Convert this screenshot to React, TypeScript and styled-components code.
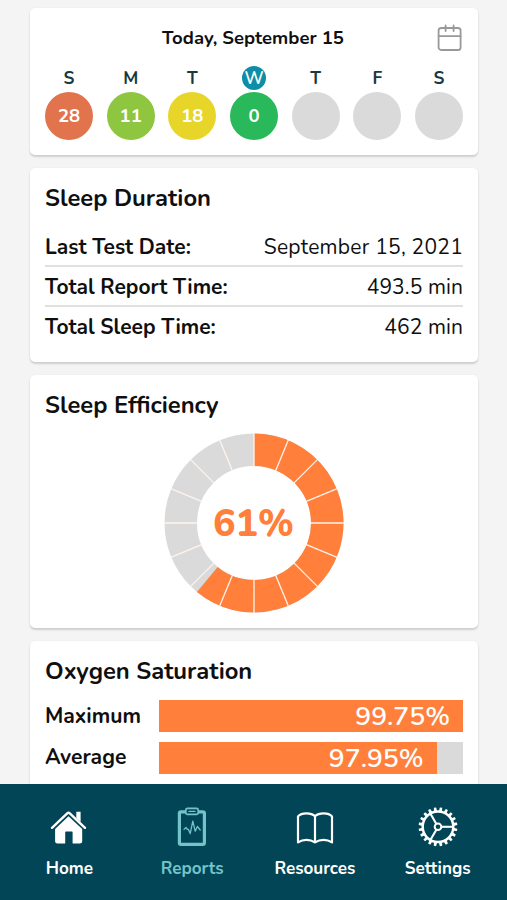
import React from "react";
import styled, { createGlobalStyle } from "styled-components";

const GlobalStyle = createGlobalStyle`
  *, *::before, *::after { box-sizing: border-box; }
  body {
    margin: 0;
    background: #f4f4f4;
    color: #0f0f10;
    font-family: "Nunito", "Lato", "Noto Sans", sans-serif;
  }
`;

const Screen = styled.div`
  display: flex;
  flex-direction: column;
  height: 900px;
  overflow: hidden;
`;

const Content = styled.main`
  flex: 1;
  min-height: 0;
  overflow: hidden;
  display: flex;
  flex-direction: column;
  gap: 13px;
  padding: 8px 29px 0 30px;
`;

const Card = styled.section<{ $height: number }>`
  flex: 0 0 ${(p) => p.$height}px;
  padding: 14px 15px 0;
  background: #fff;
  border-radius: 5px;
  box-shadow: 0 2px 2px rgba(0, 0, 0, 0.15), 0 0 2px rgba(0, 0, 0, 0.05);
`;

const CardTitle = styled.h2`
  margin: 0;
  font-size: 23.75px;
  font-weight: 700;
  line-height: 32px;
`;

const DateBar = styled.header`
  display: grid;
  grid-template-columns: 25px 1fr 27px;
  align-items: center;
  height: 32px;
`;

const DateText = styled.div`
  grid-column: 2;
  text-align: center;
  font-size: 18.5px;
  font-weight: 700;
  line-height: 30px;
`;

const Week = styled.div`
  display: flex;
  justify-content: space-between;
  margin-top: 12px;
`;

const Day = styled.div`
  display: flex;
  flex-direction: column;
  align-items: center;
  width: 48px;
  gap: 2px;
`;

const DayLetter = styled.div<{ $active?: boolean }>`
  width: 24px;
  height: 24px;
  border-radius: 50%;
  background: ${(p) => (p.$active ? "#0e8ea6" : "transparent")};
  color: ${(p) => (p.$active ? "#fff" : "#17393f")};
  font-size: 17.3px;
  font-weight: ${(p) => (p.$active ? 600 : 700)};
  line-height: 25px;
  text-align: center;
`;

const Score = styled.div<{ $color: string }>`
  width: 48px;
  height: 48px;
  border-radius: 50%;
  background: ${(p) => p.$color};
  color: #fff;
  font-size: 18.5px;
  font-weight: 700;
  line-height: 48px;
  text-align: center;
`;

const StatList = styled.dl`
  margin: 13px 0 0;
`;

const StatRow = styled.div`
  display: flex;
  justify-content: space-between;
  align-items: center;
  height: 40px;
  padding-top: 1px;
  border-bottom: 2px solid #e0e0e0;
  font-size: 21px;
  &:last-child { border-bottom-color: transparent; }
`;

const StatName = styled.dt`
  font-weight: 700;
`;

const StatValue = styled.dd<{ $spacing: number }>`
  margin: 0;
  font-weight: 400;
  letter-spacing: ${(p) => p.$spacing}px;
`;

const ChartArea = styled.div`
  display: grid;
  place-items: center;
  margin: 12px 1px 0 0;
  > * { grid-area: 1 / 1; }
`;

const ChartValue = styled.div`
  font-size: 37.5px;
  font-weight: 800;
  line-height: 51px;
  color: #ff7f3b;
`;

const BarRow = styled.div<{ $top: number }>`
  display: grid;
  grid-template-columns: 114px 304px;
  align-items: center;
  margin-top: ${(p) => p.$top}px;
  height: 32px;
`;

const BarLabel = styled.div<{ $lift: number }>`
  font-size: 21.1px;
  font-weight: 700;
  line-height: 28px;
  margin-bottom: ${(p) => p.$lift}px;
`;

const Track = styled.div`
  height: 32px;
  background: #dadada;
`;

const Fill = styled.div`
  height: 100%;
  padding-right: 13px;
  background: #ff7f3b;
  color: #fff;
  font-size: 26.5px;
  font-weight: 600;
  line-height: 33px;
  text-align: right;
`;

const Nav = styled.nav`
  flex: 0 0 116px;
  display: grid;
  grid-template-columns: repeat(4, 1fr);
  padding: 23px 8px 0;
  background: #024556;
`;

const NavItem = styled.a<{ $active?: boolean }>`
  display: flex;
  flex-direction: column;
  align-items: center;
  gap: 10px;
  color: ${(p) => (p.$active ? "#74c3c9" : "#fff")};
  font-size: 17.1px;
  font-weight: 700;
  line-height: 24px;
`;

const Icon = styled.svg`
  display: block;
  width: 40px;
  height: 40px;
`;

const CalendarSvg = styled.svg`
  display: block;
  width: 27px;
  height: 28px;
`;

const CalendarIcon = () => (
  <CalendarSvg viewBox="0 0 27 28" fill="none" stroke="#999" strokeWidth="1.8" strokeLinecap="round">
    <rect x="2.6" y="4" width="22" height="22" rx="2.6" />
    <path d="M2.6 12.2H24.6M9.6 1.4V7M17.6 1.4V7" />
  </CalendarSvg>
);

const HomeIcon = () => (
  <Icon viewBox="0 0 40 40">
    <path
      d="M3 20.8 18.2 6.3Q19.5 5.1 20.8 6.3L36 20.8"
      fill="none"
      stroke="#fff"
      strokeWidth="2.4"
      strokeLinecap="round"
      strokeLinejoin="round"
    />
    <path d="M27.3 4.7H31.6V15L27.3 11Z" fill="#fff" />
    <path d="M19.5 9.2 33.2 22V34Q33.2 36.5 30.7 36.5H23.6V25.3Q23.6 24.5 22.8 24.5H17Q16.2 24.5 16.2 25.3V36.5H8.6Q6.1 36.5 6.1 34V22Z" fill="#fff" />
  </Icon>
);

const ReportIcon = () => (
  <Icon viewBox="0 0 40 40" fill="none" stroke="currentColor" strokeLinejoin="round" strokeLinecap="round">
    <rect x="7.4" y="4.8" width="25" height="32.6" rx="1.6" strokeWidth="3.2" />
    <rect x="13.8" y="1.4" width="12.4" height="6" rx="1.6" fill="#024556" strokeWidth="1.7" />
    <path d="M17 4.4H23" strokeWidth="1.4" />
    <path d="M12 22.4 14 20.4 15.3 22.4H16.4L18.2 26.6 20.8 14.2 23.2 24.2 25.4 19.4 28.2 23" strokeWidth="1.3" />
  </Icon>
);

const BookIcon = () => (
  <Icon viewBox="0 0 40 40" fill="none" stroke="#fff" strokeWidth="2.2" strokeLinejoin="round">
    <path d="M20 9.2Q17.2 6.3 11.4 6.3T3 9.4V35.4Q7 32.8 11.5 32.8T20 35.4Q24 32.8 28.5 32.8T37 35.4V9.4Q34.4 6.3 28.6 6.3T20 9.2V35.4" />
  </Icon>
);

const TEETH = Array.from({ length: 20 }, (_, i) => i * 18);

const GearIcon = () => (
  <Icon viewBox="0 0 40 40" fill="none" stroke="#fff">
    <circle cx="20" cy="19.8" r="15.3" strokeWidth="2.5" />
    <circle cx="20" cy="19.8" r="3.3" strokeWidth="2" />
    {TEETH.map((a) => (
      <path key={a} d="M18.4 4.4 18.8 0.4H21.2L21.6 4.4Z" fill="#fff" transform={`rotate(${a + 9} 20 19.8)`} strokeWidth="0" />
    ))}
    {[90, 210, 330].map((a) => (
      <path key={a} d="M20 16.5V4.5" strokeWidth="2.1" transform={`rotate(${a} 20 19.8)`} />
    ))}
  </Icon>
);

const polar = (radius: number, degrees: number) => {
  const t = (degrees * Math.PI) / 180;
  return `${(90 + radius * Math.sin(t)).toFixed(2)} ${(90 - radius * Math.cos(t)).toFixed(2)}`;
};

const Donut = ({ value }: { value: number }) => {
  const end = value * 3.6;
  return (
    <svg width="180" height="180" viewBox="0 0 180 180">
      <circle cx="90" cy="90" r="73.25" fill="none" stroke="#dadada" strokeWidth="32.5" />
      <path
        d={`M${polar(73.25, 0)}A73.25 73.25 0 ${end > 180 ? 1 : 0} 1 ${polar(73.25, end)}`}
        fill="none"
        stroke="#ff7f3b"
        strokeWidth="32.5"
      />
      {Array.from({ length: 16 }, (_, i) => (
        <path key={i} d={`M${polar(56, i * 22.5)}L${polar(90, i * 22.5)}`} stroke="#fff4ed" strokeWidth="1.3" />
      ))}
    </svg>
  );
};

const days = [
  { letter: "S", score: "28", color: "#e1734d" },
  { letter: "M", score: "11", color: "#8fc63f" },
  { letter: "T", score: "18", color: "#e8d529" },
  { letter: "W", score: "0", color: "#29b85a", active: true },
  { letter: "T", score: "", color: "#dadada" },
  { letter: "F", score: "", color: "#dadada" },
  { letter: "S", score: "", color: "#dadada" },
];

const stats = [
  { name: "Last Test Date:", value: "September 15, 2021", spacing: 0.25 },
  { name: "Total Report Time:", value: "493.5 min", spacing: 0.1 },
  { name: "Total Sleep Time:", value: "462 min", spacing: 0.1 },
];

const bars = [
  { label: "Maximum", value: "99.75%", width: 100, top: 13, lift: 1 },
  { label: "Average", value: "97.95%", width: 91.3, top: 10, lift: 3 },
];

export default function App() {
  return (
    <Screen>
      <GlobalStyle />
      <Content>
        <Card $height={147}>
          <DateBar>
            <DateText>Today, September 15</DateText>
            <CalendarIcon />
          </DateBar>
          <Week>
            {days.map((d, i) => (
              <Day key={i}>
                <DayLetter $active={d.active}>{d.letter}</DayLetter>
                <Score $color={d.color}>{d.score}</Score>
              </Day>
            ))}
          </Week>
        </Card>

        <Card $height={194}>
          <CardTitle>Sleep Duration</CardTitle>
          <StatList>
            {stats.map((s) => (
              <StatRow key={s.name}>
                <StatName>{s.name}</StatName>
                <StatValue $spacing={s.spacing}>{s.value}</StatValue>
              </StatRow>
            ))}
          </StatList>
        </Card>

        <Card $height={253}>
          <CardTitle>Sleep Efficiency</CardTitle>
          <ChartArea>
            <Donut value={61} />
            <ChartValue>61%</ChartValue>
          </ChartArea>
        </Card>

        <Card $height={260}>
          <CardTitle>Oxygen Saturation</CardTitle>
          {bars.map((b) => (
            <BarRow key={b.label} $top={b.top}>
              <BarLabel $lift={b.lift}>{b.label}</BarLabel>
              <Track>
                <Fill style={{ width: `${b.width}%` }}>{b.value}</Fill>
              </Track>
            </BarRow>
          ))}
        </Card>
      </Content>

      <Nav>
        <NavItem>
          <HomeIcon />
          Home
        </NavItem>
        <NavItem $active>
          <ReportIcon />
          Reports
        </NavItem>
        <NavItem>
          <BookIcon />
          Resources
        </NavItem>
        <NavItem>
          <GearIcon />
          Settings
        </NavItem>
      </Nav>
    </Screen>
  );
}
